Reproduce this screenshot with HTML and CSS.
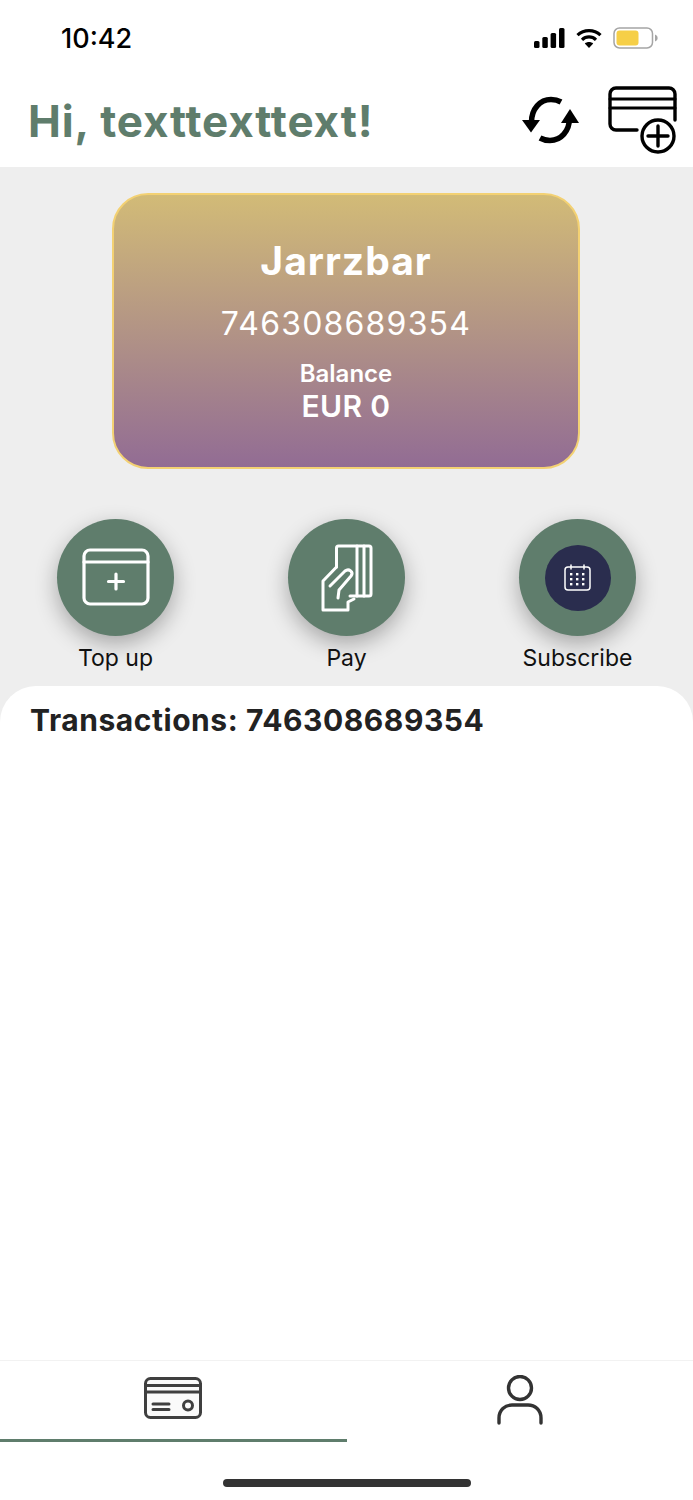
FILE: index.html
```html
<!DOCTYPE html>
<html lang="en">
<head>
  <meta charset="UTF-8">
  <meta name="viewport" content="width=device-width, initial-scale=1.0">
  <title>Wallet</title>
  <link rel="stylesheet" href="styles.css">
</head>
<body>
  <div class="status-bar">
    <span class="time">10:42</span>
    <div class="status-icons">
      <svg width="31" height="20" viewBox="0 0 31 20" fill="#000">
        <rect x="0" y="13" width="5.500" height="7" rx="1.5"/>
        <rect x="8.300" y="9" width="5.500" height="11" rx="1.5"/>
        <rect x="16.600" y="5" width="5.500" height="15" rx="1.5"/>
        <rect x="25" y="0" width="5.500" height="20" rx="1.5"/>
      </svg>
      <svg width="26" height="20" viewBox="0 0 26 20" fill="none" stroke="#000" stroke-width="3.2">
        <path d="M1.500 7.200C8 1 18 1 24.500 7.200"/>
        <path d="M6 11.800C10 8 16 8 20 11.800"/>
        <path d="M13 20l-4.200-4.400C11 13.600 15 13.600 17.200 15.600z" fill="#000" stroke="none"/>
      </svg>
      <svg width="45" height="22" viewBox="0 0 45 22" fill="none">
        <rect x="1" y="1" width="38.500" height="20" rx="5.500" stroke="#a5a5a5" stroke-width="1.5"/>
        <rect x="3.500" y="3.500" width="22" height="15" rx="3" fill="#f6cf47"/>
        <path d="M42 7.500c2 .7 2.600 2 2.600 3.500s-.6 2.800-2.600 3.500z" fill="#a5a5a5"/>
      </svg>
    </div>
  </div>

  <header class="top-bar">
    <h1 class="greeting">Hi, texttexttext!</h1>
    <div class="top-actions">
      <svg class="icon-refresh" width="58" height="48" viewBox="0 0 58 48" fill="none" stroke="#000" stroke-width="5.500">
        <path d="M9.500 26C9.500 13 18 3.500 29 3.500c4 0 7 .8 10 2.500"/>
        <path d="M47.500 22C47.500 35 39 44.500 28 44.500c-4 0-7-.8-10-2.500"/>
        <path d="M0 24h18L9 36.500z" fill="#000" stroke="none"/>
        <path d="M39 27h18L48 13z" fill="#000" stroke="none"/>
      </svg>
      <svg class="icon-add-card" width="70" height="68" viewBox="0 0 70 68" fill="none" stroke="#000" stroke-width="3.400" stroke-linecap="round">
        <path d="M30 44H9a6 6 0 0 1-6-6V8a6 6 0 0 1 6-6h53a6 6 0 0 1 6 6v26"/>
        <path d="M3 13h65M3 22h65" stroke-width="3"/>
        <circle cx="51" cy="50" r="16"/>
        <path d="M51 40v20M41 50h20"/>
      </svg>
    </div>
  </header>

  <main class="content">
    <section class="card">
      <div class="card-name">Jarrzbar</div>
      <div class="card-number">746308689354</div>
      <div class="card-label">Balance</div>
      <div class="card-balance">EUR 0</div>
    </section>

    <section class="actions">
      <div class="action">
        <div class="action-circle">
          <svg class="icon-top-up" width="68" height="58" viewBox="0 0 68 58" fill="none" stroke="#fff" stroke-width="3.200" stroke-linecap="round">
            <rect x="2" y="2" width="64" height="54" rx="6"/>
            <path d="M2 14h64"/>
            <path d="M34 26v15M26.500 33.500h15"/>
          </svg>
        </div>
        <span class="action-label">Top up</span>
      </div>
      <div class="action">
        <div class="action-circle">
          <svg width="52" height="68" viewBox="0 0 52 68" fill="none" stroke="#fff" stroke-width="3" stroke-linecap="round" stroke-linejoin="round">
            <path d="M15.500 23V4a2 2 0 0 1 2-2H48a2 2 0 0 1 2 2v46a2 2 0 0 1-2 2H29"/>
            <path d="M36 2v50M43 2v50"/>
            <path d="M15.500 23L2 37v29h25v-8l6-3"/>
            <path d="M9 42L24 27c4-3 9 1 6 5L18 46l-1 8"/>
          </svg>
        </div>
        <span class="action-label">Pay</span>
      </div>
      <div class="action">
        <div class="action-circle">
          <div class="inner-circle">
            <svg width="27" height="27" viewBox="0 0 27 27" fill="none" stroke="#fff" stroke-width="1.500" stroke-linecap="round">
              <rect x="1" y="3" width="25" height="23" rx="3"/>
              <path d="M7 1v4M20 1v4"/>
              <g fill="#fff" stroke="none">
                <rect x="6" y="9" width="2.400" height="2.400"/><rect x="12" y="9" width="2.400" height="2.400"/><rect x="18" y="9" width="2.400" height="2.400"/>
                <rect x="6" y="14" width="2.400" height="2.400"/><rect x="12" y="14" width="2.400" height="2.400"/><rect x="18" y="14" width="2.400" height="2.400"/>
                <rect x="6" y="19" width="2.400" height="2.400"/><rect x="12" y="19" width="2.400" height="2.400"/><rect x="18" y="19" width="2.400" height="2.400"/>
              </g>
            </svg>
          </div>
        </div>
        <span class="action-label">Subscribe</span>
      </div>
    </section>

    <section class="sheet">
      <h2 class="sheet-title">Transactions: 746308689354</h2>
    </section>
  </main>

  <nav class="tab-bar">
    <div class="tabs">
      <div class="tab tab-active">
        <svg width="58" height="42" viewBox="0 0 58 42" fill="#fafafa" stroke="#3f3f3f" stroke-width="3" stroke-linecap="round">
          <rect x="1.500" y="1.500" width="55" height="39" rx="5"/>
          <path d="M1.500 8.500h55M1.500 15h55"/>
          <path d="M9 27h16M9 32.500h16"/>
          <circle cx="44" cy="28.500" r="4.500"/>
        </svg>
      </div>
      <div class="tab">
        <svg width="46" height="50" viewBox="0 0 46 50" fill="none" stroke="#333" stroke-width="3.400" stroke-linecap="round">
          <circle cx="23" cy="13" r="11.500"/>
          <path d="M2 48v-5c0-8 6-13 13-13h16c7 0 13 5 13 13v5"/>
        </svg>
      </div>
    </div>
    <div class="home-indicator"></div>
  </nav>
</body>
</html>
```

FILE: styles.css
```css
/* General Styles */
body {
  font-family: Inter, "Noto Sans", sans-serif;
  margin: 0;
  padding: 0;
  height: 1500px;
  width: 693px;
  display: flex;
  flex-direction: column;
  background-color: white;
  color: #222;
  overflow: hidden;
}

/* Status Bar */
.status-bar {
  height: 76px;
  display: flex;
  justify-content: space-between;
  align-items: center;
  padding: 0 35px 0 61px;
  box-sizing: border-box;
}

.time {
  font-size: 27px;
  font-weight: 500;
  color: #000;
}

.status-icons {
  display: flex;
  align-items: center;
  gap: 11px;
}

/* Header */
.top-bar {
  height: 91px;
  display: flex;
  justify-content: space-between;
  padding: 0 16px 0 28px;
}

.greeting {
  margin: 20px 0 0;
  font-size: 44px;
  line-height: 50px;
  font-weight: 700;
  letter-spacing: 0.9px;
  color: #5f7d6c;
}

.top-actions {
  display: flex;
  align-items: flex-start;
  gap: 27px;
}

.icon-refresh {
  margin-top: 20px;
}

.icon-add-card {
  margin-top: 10px;
}

/* Main */
.content {
  flex: 1;
  display: flex;
  flex-direction: column;
  background-color: #eeeeee;
}

.card {
  width: 468px;
  height: 276px;
  margin: 26px 0 0 112px;
  box-sizing: border-box;
  border: 2px solid #f3d173;
  border-radius: 36px;
  background: linear-gradient(to bottom, #d2bb77, #926c94);
  color: white;
  text-align: center;
}

.card-name {
  margin-top: 41px;
  font-size: 39px;
  line-height: 50px;
  font-weight: 700;
  letter-spacing: 1px;
}

.card-number {
  margin-top: 13px;
  font-size: 32px;
  line-height: 50px;
  letter-spacing: 1.2px;
}

.card-label {
  margin-top: 10px;
  font-size: 24px;
  line-height: 30px;
  font-weight: 600;
}

.card-balance {
  font-size: 30px;
  line-height: 35px;
  font-weight: 600;
  letter-spacing: 0.4px;
}

/* Action Buttons */
.actions {
  display: grid;
  grid-template-columns: repeat(3, 231px);
  margin-top: 50px;
}

.action {
  display: flex;
  flex-direction: column;
  align-items: center;
}

.action-circle {
  width: 117px;
  height: 117px;
  border-radius: 50%;
  background-color: #5f7d6c;
  box-shadow: 0 8px 22px rgba(0, 0, 0, 0.3);
  display: flex;
  align-items: center;
  justify-content: center;
}

.icon-top-up {
  margin-bottom: 1px;
}

.inner-circle {
  width: 66px;
  height: 66px;
  border-radius: 50%;
  background-color: #2a2d4e;
  display: flex;
  align-items: center;
  justify-content: center;
}

.action-label {
  margin-top: 7px;
  font-size: 23px;
  line-height: 30px;
  color: #111;
}

/* Transactions */
.sheet {
  flex: 1;
  margin-top: 13px;
  padding: 16px 30px 0;
  background-color: white;
  border-radius: 36px 36px 0 0;
}

.sheet-title {
  margin: 0;
  font-size: 30px;
  line-height: 36px;
  font-weight: 700;
  letter-spacing: 0.55px;
  color: #222;
}

/* Tab Bar */
.tab-bar {
  height: 140px;
  box-sizing: border-box;
  border-top: 1px solid #f2f2f2;
  background-color: white;
}

.tabs {
  display: grid;
  grid-template-columns: 1fr 1fr;
  height: 81px;
}

.tab {
  display: flex;
  align-items: center;
  justify-content: center;
  padding-bottom: 4px;
}

.tab-active {
  border-bottom: 3px solid #5f7d6c;
}

.home-indicator {
  width: 248px;
  height: 8px;
  margin: 37px auto 0;
  border-radius: 4px;
  background-color: #333;
}
```
